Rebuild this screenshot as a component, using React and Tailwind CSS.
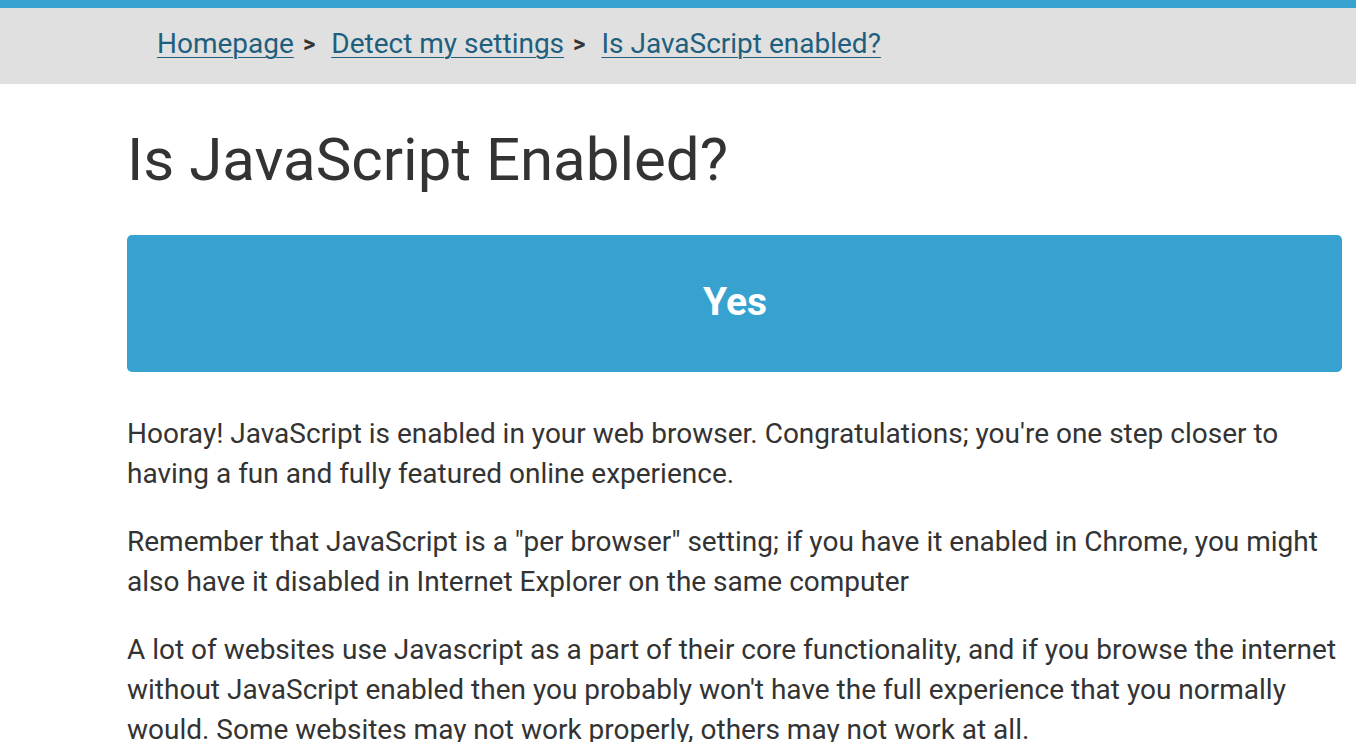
import React from "react";

const PARAGRAPHS = [
  "Hooray! JavaScript is enabled in your web browser. Congratulations; you're one step closer to having a fun and fully featured online experience.",
  'Remember that JavaScript is a "per browser" setting; if you have it enabled in Chrome, you might also have it disabled in Internet Explorer on the same computer',
  "A lot of websites use Javascript as a part of their core functionality, and if you browse the internet without JavaScript enabled then you probably won't have the full experience that you normally would. Some websites may not work properly, others may not work at all.",
];

const CRUMBS = ["Homepage", "Detect my settings", "Is JavaScript enabled?"];

export default function App() {
  return (
    <div className="min-h-screen bg-white text-[#333] font-['Roboto',sans-serif]">
      <div className="h-2 bg-[#37a2d0]" />

      {/* breadcrumb */}
      <nav className="bg-[#e0e0e0] h-[76px] flex items-center pl-[157px] pb-[4px] text-[28px]">
        {CRUMBS.map((c, i) => (
          <React.Fragment key={c}>
            <a href="#" className="text-[#1e5f7e] underline underline-offset-[4px] decoration-1">
              {c}
            </a>
            {i < CRUMBS.length - 1 && (
              <span className="font-bold text-[#333] text-[24px] ml-[9px] mr-[16px]">&gt;</span>
            )}
          </React.Fragment>
        ))}
      </nav>

      <main className="pl-[127px] pr-[14px]">
        <h1 className="text-[60px] leading-none font-normal mt-[46px] mb-[45px]">Is JavaScript Enabled?</h1>

        <div className="h-[137px] rounded-[5px] bg-[#37a2d0] flex items-center justify-center text-white text-[39px] font-bold pl-[1px] pb-[2px]">
          Yes
        </div>

        <div className="mt-[42px] flex flex-col gap-[28px] text-[28px] leading-[40px]">
          {PARAGRAPHS.map((p) => (
            <p key={p.slice(0, 20)}>{p}</p>
          ))}
        </div>
      </main>
    </div>
  );
}
